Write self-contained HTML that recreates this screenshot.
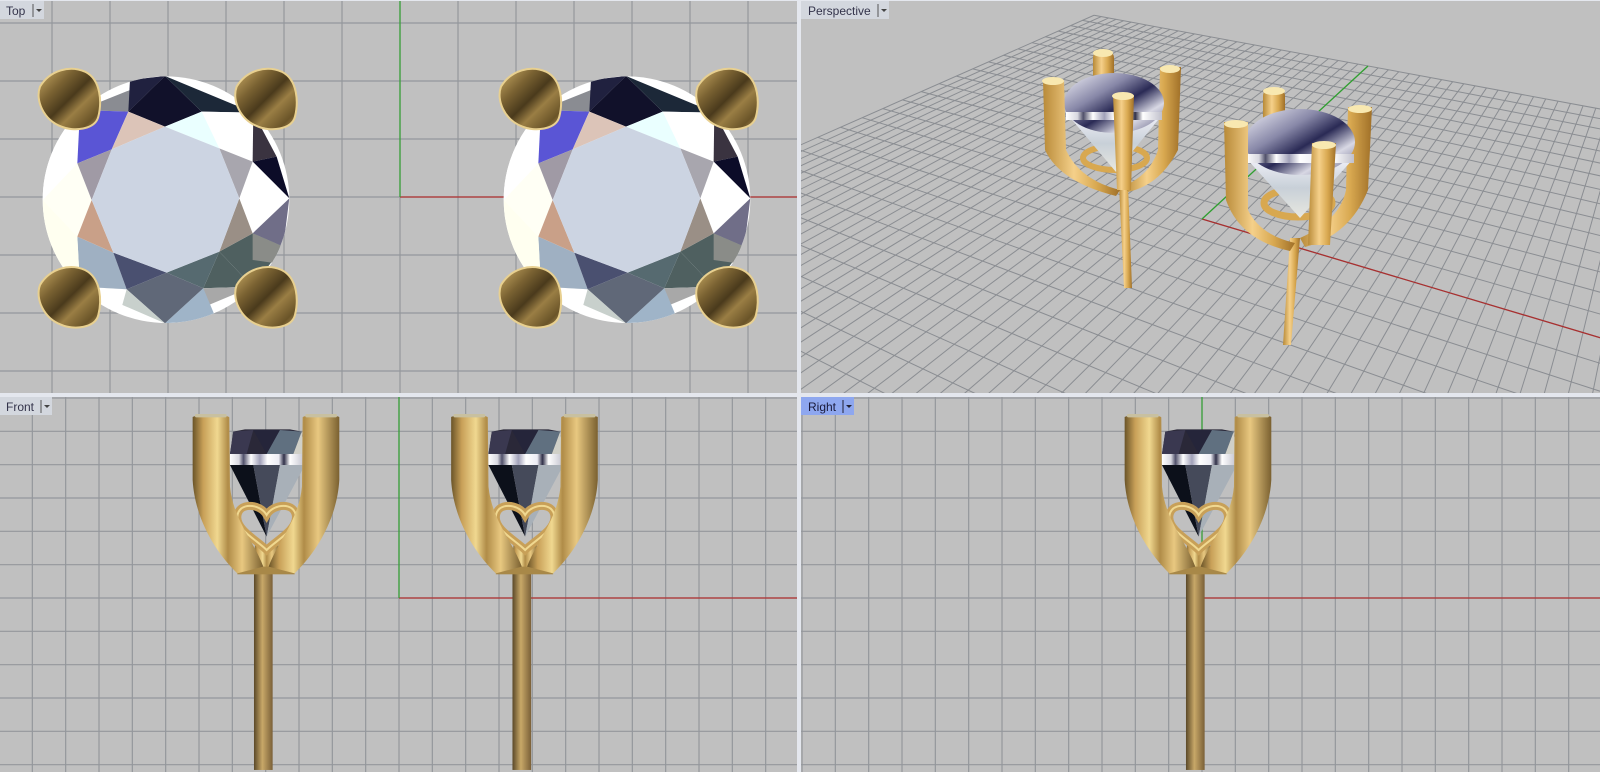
<!DOCTYPE html>
<html><head><meta charset="utf-8">
<style>
html,body{margin:0;padding:0;background:#c0c0c0;width:1600px;height:772px;overflow:hidden;}
svg{display:block;}
text{font-family:"Liberation Sans",sans-serif;font-size:12px;fill:#33334a;}
</style></head>
<body>
<svg id="s" width="1600" height="772" viewBox="0 0 1600 772" xmlns="http://www.w3.org/2000/svg">
<defs>
  <clipPath id="cTop"><rect x="0" y="0" width="797" height="393"/></clipPath>
  <clipPath id="cPer"><rect x="801" y="0" width="799" height="393"/></clipPath>
  <clipPath id="cFr"><rect x="0" y="397" width="797" height="375"/></clipPath>
  <clipPath id="cRi"><rect x="801" y="397" width="799" height="375"/></clipPath>
  <clipPath id="stoneClip"><circle cx="408" cy="419" r="370"/></clipPath>
  <linearGradient id="prongG" x1="0" y1="0" x2="1" y2="1">
    <stop offset="0" stop-color="#d0b068"/>
    <stop offset="0.3" stop-color="#7a6232"/>
    <stop offset="0.5" stop-color="#4a3a1c"/>
    <stop offset="0.65" stop-color="#9a7e44"/>
    <stop offset="0.85" stop-color="#6a5428"/>
    <stop offset="1" stop-color="#b89858"/>
  </linearGradient>
  <linearGradient id="armG" x1="0" x2="1" y1="0" y2="0">
    <stop offset="0" stop-color="#6a5428"/>
    <stop offset="0.15" stop-color="#c8a058"/>
    <stop offset="0.35" stop-color="#f0d890"/>
    <stop offset="0.5" stop-color="#b08c48"/>
    <stop offset="0.7" stop-color="#e8c880"/>
    <stop offset="1" stop-color="#7a6030"/>
  </linearGradient>
  <linearGradient id="stemG" x1="0" x2="1" y1="0" y2="0">
    <stop offset="0" stop-color="#5a4828"/>
    <stop offset="0.45" stop-color="#c8a868"/>
    <stop offset="1" stop-color="#7a6038"/>
  </linearGradient>
  <linearGradient id="bandG" x1="0" x2="1" y1="0" y2="0">
    <stop offset="0" stop-color="#ffffff"/>
    <stop offset="0.12" stop-color="#d8d8e0"/>
    <stop offset="0.18" stop-color="#50506a"/>
    <stop offset="0.28" stop-color="#ffffff"/>
    <stop offset="0.4" stop-color="#a0a0b8"/>
    <stop offset="0.5" stop-color="#ffffff"/>
    <stop offset="0.65" stop-color="#ececf4"/>
    <stop offset="0.72" stop-color="#303048"/>
    <stop offset="0.8" stop-color="#ffffff"/>
    <stop offset="1" stop-color="#c0c0cc"/>
  </linearGradient>
  <linearGradient id="pgold" x1="0" x2="1" y1="0" y2="0">
    <stop offset="0" stop-color="#b88a38"/>
    <stop offset="0.4" stop-color="#f5d08a"/>
    <stop offset="0.7" stop-color="#d8a850"/>
    <stop offset="1" stop-color="#a07028"/>
  </linearGradient>
  <linearGradient id="pstone" x1="0" x2="1" y1="0" y2="1">
    <stop offset="0" stop-color="#f4f4fa"/>
    <stop offset="0.35" stop-color="#8888a8"/>
    <stop offset="0.55" stop-color="#2a2a55"/>
    <stop offset="0.75" stop-color="#d8d8e4"/>
    <stop offset="1" stop-color="#5a5a80"/>
  </linearGradient>
  <linearGradient id="ppav" x1="0" x2="0" y1="0" y2="1">
    <stop offset="0" stop-color="#f0f0f8"/>
    <stop offset="0.5" stop-color="#c8d0d8"/>
    <stop offset="1" stop-color="#e8e8e0"/>
  </linearGradient>

  <path id="prong" d="M30,80 C60,30 120,15 165,35 C215,60 215,130 205,170 C195,210 130,215 95,200 C40,180 15,120 30,80 Z"/>

  <g id="stone">
    <circle cx="408" cy="419" r="370" fill="#ffffff"/>
    <g clip-path="url(#stoneClip)">
      <polygon points="405,48 150,150 295,155" fill="#8a8c92"/>
      <polygon points="405,48 295,155 405,200 515,155" fill="#11112a"/>
      <polygon points="405,48 515,155 670,158" fill="#1c2838"/>
      <polygon points="300,60 405,48 295,155" fill="#20213f"/>
      <polygon points="515,155 568,265 668,305 670,158" fill="#ffffff"/>
      <polygon points="670,158 668,305 740,290" fill="#3a3340"/>
      <polygon points="668,305 740,290 778,415" fill="#0c0c28"/>
      <polygon points="668,305 628,415 778,415" fill="#ffffff"/>
      <polygon points="628,415 668,520 778,415" fill="#ffffff"/>
      <polygon points="778,415 668,520 760,560" fill="#706e88"/>
      <polygon points="668,520 760,560 668,680 568,575" fill="#4f6060"/>
      <polygon points="668,520 760,560 740,610 668,600" fill="#8a8c88"/>
      <polygon points="568,575 520,685 668,680" fill="#4f6060"/>
      <polygon points="520,685 668,680 405,790" fill="#a8a8a8"/>
      <polygon points="520,685 410,638 290,688 405,790" fill="#606878"/>
      <polygon points="405,790 520,685 560,780" fill="#9fb4c8"/>
      <polygon points="290,688 150,680 405,790" fill="#c8d0cc"/>
      <polygon points="150,680 290,688 270,760" fill="#ffffff"/>
      <polygon points="290,688 250,578 142,530 150,680" fill="#9fb0c2"/>
      <polygon points="142,530 185,420 142,310 38,420" fill="#fffff5"/>
      <polygon points="150,680 142,530 38,420 40,600" fill="#fffff0"/>
      <polygon points="38,420 142,310 150,150 40,250" fill="#ffffff"/>
      <polygon points="142,310 245,268 295,155 150,150" fill="#5a55d5"/>
      <polygon points="405,200 568,265 515,155" fill="#eaffff"/>
      <polygon points="568,265 628,415 668,305" fill="#a8a6ae"/>
      <polygon points="628,415 568,575 668,520" fill="#9a8f86"/>
      <polygon points="568,575 410,638 520,685" fill="#566a70"/>
      <polygon points="410,638 250,578 290,688" fill="#4a5070"/>
      <polygon points="250,578 185,420 142,530" fill="#c9a088"/>
      <polygon points="185,420 245,268 142,310" fill="#a09aa5"/>
      <polygon points="245,268 405,200 295,155" fill="#dcc4b8"/>
      <polygon points="405,200 568,265 628,415 568,575 410,638 250,578 185,420 245,268" fill="#ccd4e2"/>
    </g>
    <use href="#prong" fill="url(#prongG)" stroke="#e8d090" stroke-width="6"/>
    <use href="#prong" transform="translate(590,0)" fill="url(#prongG)" stroke="#e8d090" stroke-width="6"/>
    <use href="#prong" transform="translate(0,595)" fill="url(#prongG)" stroke="#e8d090" stroke-width="6"/>
    <use href="#prong" transform="translate(590,595)" fill="url(#prongG)" stroke="#e8d090" stroke-width="6"/>
  </g>

  <g id="ear">
    <polygon points="690,222 700,155 735,148 870,148 905,155 915,222" fill="#2a2838"/>
    <polygon points="700,155 760,150 740,222 690,222" fill="#3a3850"/>
    <polygon points="760,150 840,150 800,222" fill="#25253a"/>
    <polygon points="840,150 905,155 880,222 800,222" fill="#607080"/>
    <polygon points="880,222 905,155 915,222" fill="#d0d0c8"/>
    <rect x="690" y="222" width="225" height="33" fill="url(#bandG)"/>
    <polygon points="690,255 760,255 800,470" fill="#0c101a"/>
    <polygon points="760,255 840,255 800,470" fill="#454a5a"/>
    <polygon points="840,255 915,255 800,470" fill="#a8b0b8"/>
    <rect x="762" y="580" width="56" height="590" fill="url(#stemG)"/>
    <rect x="712" y="548" width="172" height="35" fill="#a88848"/>
    <path d="M765,495 L835,495 L840,560 L760,560 Z" fill="url(#armG)"/>
    <path d="M800,405 C780,370 715,365 712,410 C710,450 770,480 800,510 C830,480 890,450 888,410 C885,365 820,370 800,405 Z" fill="none" stroke="#c8a058" stroke-width="24"/>
    <path d="M800,405 C780,370 715,365 712,410 C710,450 770,480 800,510 C830,480 890,450 888,410 C885,365 820,370 800,405 Z" fill="none" stroke="#f0d890" stroke-width="6"/>
    <path d="M578,112 C575,104 685,102 688,112 L690,320 C700,420 760,480 790,560 L712,580 C650,520 585,420 578,300 Z" fill="url(#armG)"/>
    <path d="M1018,112 C1021,104 911,102 908,112 L906,320 C896,420 836,480 806,560 L884,580 C946,520 1011,420 1018,300 Z" fill="url(#armG)"/>
    <rect x="585" y="102" width="95" height="10" rx="4" fill="#c8c0a0"/>
    <rect x="916" y="102" width="95" height="10" rx="4" fill="#c8c0a0"/>
  </g>
</defs>

<rect x="0" y="0" width="1600" height="772" fill="#c0c0c0"/>
<g id="gPer" clip-path="url(#cPer)"></g>
<g id="gTop" clip-path="url(#cTop)"></g>
<g id="gFr" clip-path="url(#cFr)"></g>
<g id="gRi" clip-path="url(#cRi)"></g>

<g clip-path="url(#cTop)">
  <line x1="400" y1="197" x2="797" y2="197" stroke="#b03030" stroke-width="1.2"/>
  <line x1="400" y1="0" x2="400" y2="197" stroke="#30a030" stroke-width="1.2"/>
  <use href="#stone" transform="translate(30,60) scale(0.3333)"/>
  <use href="#stone" transform="translate(491,60) scale(0.3333)"/>
</g>

<g clip-path="url(#cFr)">
  <line x1="399" y1="598" x2="797" y2="598" stroke="#b03030" stroke-width="1.2"/>
  <line x1="399" y1="397" x2="399" y2="598" stroke="#30a030" stroke-width="1.2"/>
  <use href="#ear" transform="translate(0,380) scale(0.3333)"/>
  <use href="#ear" transform="translate(258.5,380) scale(0.3333)"/>
</g>

<g clip-path="url(#cRi)">
  <line x1="1202" y1="598" x2="1600" y2="598" stroke="#b03030" stroke-width="1.2"/>
  <line x1="1202" y1="397" x2="1202" y2="598" stroke="#30a030" stroke-width="1.2"/>
  <use href="#ear" transform="translate(932,380) scale(0.3333)"/>
</g>

<g clip-path="url(#cPer)">
  <polygon points="1119,185 1128,185 1132,288 1124,288" fill="url(#pgold)"/>
  <rect x="1093" y="50" width="21" height="60" rx="8" fill="url(#pgold)"/>
  <ellipse cx="1103" cy="53" rx="10" ry="4" fill="#f8e8b0"/>
  <path d="M1160,67 L1181,67 L1178,150 Q1160,185 1128,192 L1124,186 Q1150,175 1158,150 Z" fill="url(#pgold)"/>
  <ellipse cx="1170" cy="69" rx="10" ry="4" fill="#f8e8b0"/>
  <ellipse cx="1115" cy="158" rx="32" ry="12" fill="none" stroke="#d8a850" stroke-width="6"/>
  <polygon points="1068,115 1162,115 1116,172" fill="url(#ppav)"/>
  <ellipse cx="1114" cy="103" rx="50" ry="30" fill="url(#pstone)"/>
  <rect x="1066" y="112" width="96" height="8" fill="url(#bandG)"/>
  <path d="M1043,80 L1064,80 L1066,150 Q1080,180 1120,190 L1116,196 Q1060,182 1045,150 Z" fill="url(#pgold)"/>
  <ellipse cx="1053" cy="81" rx="11" ry="4" fill="#f8e8b0"/>
  <path d="M1113,95 L1134,95 L1131,190 L1117,190 Z" fill="url(#pgold)"/>
  <ellipse cx="1123" cy="96" rx="11" ry="4" fill="#f8e8b0"/>

  <polygon points="1290,238 1300,238 1291,345 1283,345" fill="url(#pgold)"/>
  <rect x="1263" y="88" width="22" height="60" rx="8" fill="url(#pgold)"/>
  <ellipse cx="1274" cy="91" rx="11" ry="4" fill="#f8e8b0"/>
  <path d="M1348,107 L1372,107 L1368,190 Q1350,235 1305,247 L1300,238 Q1340,220 1346,190 Z" fill="url(#pgold)"/>
  <ellipse cx="1360" cy="109" rx="12" ry="4" fill="#f8e8b0"/>
  <ellipse cx="1298" cy="203" rx="34" ry="14" fill="none" stroke="#d8a850" stroke-width="7"/>
  <polygon points="1246,158 1354,158 1300,218" fill="url(#ppav)"/>
  <ellipse cx="1300" cy="142" rx="55" ry="33" fill="url(#pstone)"/>
  <rect x="1246" y="154" width="108" height="9" fill="url(#bandG)"/>
  <path d="M1224,122 L1248,122 L1248,210 Q1260,235 1295,243 L1290,251 Q1240,240 1226,200 Z" fill="url(#pgold)"/>
  <ellipse cx="1236" cy="124" rx="12" ry="4" fill="#f8e8b0"/>
  <path d="M1312,143 L1336,143 L1330,245 L1308,245 Z" fill="url(#pgold)"/>
  <ellipse cx="1324" cy="145" rx="12" ry="4" fill="#f8e8b0"/>
</g>

<rect x="797" y="0" width="4" height="772" fill="#e4e7ee"/>
<rect x="0" y="393" width="1600" height="4" fill="#e4e7ee"/>
<rect x="0" y="0" width="1600" height="1" fill="#e4e7ee"/>

<rect x="0" y="1" width="44" height="18" fill="#d3d7de"/>
<text x="6" y="15">Top</text>
<line x1="33" y1="4" x2="33" y2="17" stroke="#555"/>
<polygon points="36,9 42,9 39,12" fill="#444"/>

<rect x="801" y="1" width="88" height="18" fill="#d3d7de"/>
<text x="808" y="15">Perspective</text>
<line x1="878" y1="4" x2="878" y2="17" stroke="#555"/>
<polygon points="881,9 887,9 884,12" fill="#444"/>

<rect x="0" y="397" width="52" height="18" fill="#d3d7de"/>
<text x="6" y="411">Front</text>
<line x1="41" y1="400" x2="41" y2="413" stroke="#555"/>
<polygon points="44,405 50,405 47,408" fill="#444"/>

<rect x="801" y="397" width="53" height="18" fill="#8ea7ef"/>
<text x="808" y="411" style="fill:#1a1a3a">Right</text>
<line x1="843" y1="400" x2="843" y2="413" stroke="#223"/>
<polygon points="846,405 852,405 849,408" fill="#223"/>
</svg>
<script>
(function(){
  var NS="http://www.w3.org/2000/svg";
  function cl(v,lo,hi){return Math.max(lo,Math.min(hi,v));}
  function ln(g,x1,y1,x2,y2,c,w){var l=document.createElementNS(NS,"line");
    l.setAttribute("x1",x1);l.setAttribute("y1",y1);l.setAttribute("x2",x2);l.setAttribute("y2",y2);
    l.setAttribute("stroke",c);l.setAttribute("stroke-width",w||1);g.appendChild(l);}
  var gT=document.getElementById("gTop"),gF=document.getElementById("gFr"),gR=document.getElementById("gRi"),gP=document.getElementById("gPer");
  var c="#94979c",k;
  for(k=-6;k<=6;k++){var x=400+58*k;if(x>=0&&x<=797)ln(gT,x,0,x,393,c,1.2);var y=197+58*k;if(y>=0&&y<=393)ln(gT,0,y,797,y,c,1.2);}
  var s=100/3;
  for(k=-12;k<=12;k++){var x2=399+s*k;if(x2>=0&&x2<=797)ln(gF,x2,397,x2,772,c,1.2);var y2=598+s*k;if(y2>=397&&y2<=772)ln(gF,0,y2,797,y2,c,1.2);}
  for(k=-12;k<=12;k++){var x3=1202+s*k;if(x3>=801&&x3<=1600)ln(gR,x3,397,x3,772,c,1.2);var y3=598+s*k;if(y3>=397&&y3<=772)ln(gR,801,y3,1600,y3,c,1.2);}
  var P1=[-425,-266],P2=[1726,-264],O=[1202,219],NU=32,NV=15,a=0.264/NU,b=0.4637/NV;
  function pr(u,v){var S=a*u,T=b*v,W=1+S+T;return[(P1[0]*S+P2[0]*T+O[0])/W,(P1[1]*S+P2[1]*T+O[1])/W];}
  var pc="#8a8d92";
  for(var v=-NV;v<=NV;v++){var A=pr(-NU,v),B=pr(NU,v);ln(gP,A[0],A[1],B[0],B[1],pc,1);}
  for(var u=-NU;u<=NU;u++){var C=pr(u,-NV),D=pr(u,NV);ln(gP,C[0],C[1],D[0],D[1],pc,1);}
  var o=pr(0,0),r=pr(-NU,0),g=pr(0,NV);
  ln(gP,o[0],o[1],r[0],r[1],"#a83030",1.3);
  ln(gP,o[0],o[1],g[0],g[1],"#30a030",1.3);
})();
</script>
</body></html>
